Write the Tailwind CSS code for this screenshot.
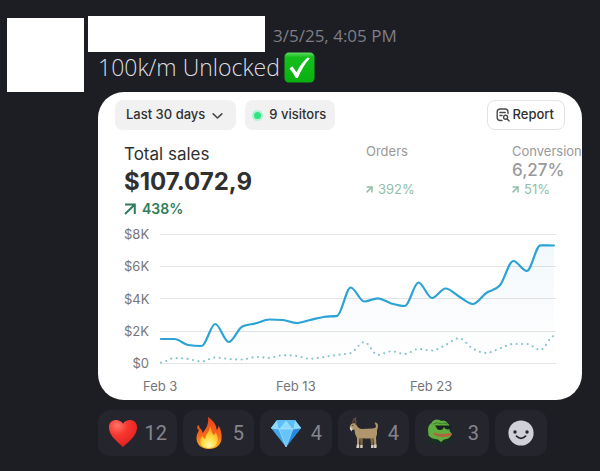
<!DOCTYPE html>
<html lang="en">
<head>
  <meta charset="UTF-8" />
  <meta name="viewport" content="width=device-width, initial-scale=1.0" />
  <title>100k/m Unlocked</title>
  <script src="https://cdn.jsdelivr.net/npm/@tailwindcss/browser@4"></script>
</head>
<body class="min-h-screen bg-[#1d1e23] overflow-x-hidden font-['Open_Sans',sans-serif]">

  <article class="flex pt-4 pl-[7px] pr-[18px]">
    <!-- Avatar -->
    <div class="mt-[2px] w-[77px] h-[74px] bg-white shrink-0"></div>

    <div class="ml-1 flex-1 min-w-0">
      <header class="flex items-center gap-2">
        <div class="w-[177px] h-9 bg-white shrink-0"></div>
        <time class="pt-1 text-[17px] leading-6 text-[#7d7d86] whitespace-nowrap">3/5/25, 4:05 PM</time>
      </header>

      <div class="pl-[10px]">
        <p class="flex items-center gap-1 h-[30px] text-[23px] font-light text-[#dcdce0] whitespace-nowrap">
          100k/m Unlocked
          <svg class="w-[31px] h-[31px] shrink-0" viewBox="0 0 31 31" aria-label="check">
            <defs>
              <linearGradient id="green" x1="0" y1="0" x2="0" y2="1">
                <stop offset="0" stop-color="#5fdc62" /><stop offset=".16" stop-color="#14bf1c" /><stop offset="1" stop-color="#08b010" />
              </linearGradient>
            </defs>
            <rect x=".5" y=".5" width="30" height="30" rx="4.500" fill="url(#green)" />
            <path d="M5.500 16.500 8.300 14.200 12.500 20.300 Q17 11 23.600 5.500 L25.800 6.300 Q18.500 14.500 13.800 26 L11.800 26 Q9 20.500 5.500 16.500Z" fill="#fff" />
          </svg>
        </p>

        <!-- Sales card -->
        <section class="mt-[10px] rounded-[26px] bg-white overflow-hidden font-['Inter',sans-serif] text-[#303030]">
          <div class="flex items-center gap-[9px] pt-2 pl-[17px] pr-[17px]">
            <button class="flex items-center gap-[6px] h-[30px] pl-[11px] pr-3 rounded-lg bg-[#f1f1f1] text-[13px] font-medium whitespace-nowrap">
              Last 30 days
              <svg class="w-[13px] h-[13px]" viewBox="0 0 12 12" fill="none" stroke="#4a4a4a" stroke-width="1.500" stroke-linecap="round" stroke-linejoin="round"><path d="M2 4.500 6 8.300 10 4.500" /></svg>
            </button>
            <button class="flex items-center gap-2 h-[30px] px-[9px] rounded-lg bg-[#f1f1f1] text-[13px] font-medium whitespace-nowrap">
              <span class="w-[7px] h-[7px] rounded-full bg-[#2ee585] ring-2 ring-[#b5f3d0]"></span>
              9 visitors
            </button>
            <button class="ml-auto flex items-center gap-[3px] h-[30px] pl-2 pr-[10px] rounded-lg border border-[#e3e3e3] text-[13px] font-medium whitespace-nowrap">
              <svg class="w-[14px] h-[14px]" viewBox="0 0 14 14" fill="none" stroke="#4a4a4a" stroke-width="1.400" stroke-linecap="round">
                <path d="M6 12.500H4.300Q1.200 12.500 1.200 9.400V4Q1.200 1 4.300 1H9Q12 1 12 4V5.500M3.900 4.500H9.300M3.900 7.500H6" />
                <circle cx="9.600" cy="9.300" r="2" /><path d="m11.200 10.900 1.900 2" />
              </svg>
              Report
            </button>
          </div>

          <div class="flex pl-[26px] mt-[11px] whitespace-nowrap">
            <div class="w-[242px] shrink-0 pt-px">
              <h2 class="text-[17px] leading-6">Total sales</h2>
              <p class="text-2xl leading-8 font-bold">$107.072,9</p>
              <p class="flex items-center gap-[6px] text-[14px] leading-[22px] font-semibold text-[#2f7d5b]">
                <svg class="w-3 h-3" viewBox="0 0 12 12" fill="none" stroke="currentColor" stroke-width="2"><path d="M1 1.500H10.800V11M10.500 1.800 1 11" /></svg>
                438%
              </p>
            </div>
            <div class="w-[146px] shrink-0 text-[#999]">
              <h3 class="text-[13px] leading-5">Orders</h3>
              <p class="mt-[18px] flex items-center gap-[5px] text-[13px] leading-5 text-[#8fbfa9]">
                <svg class="w-[7px] h-[7px]" viewBox="0 0 7 7" fill="none" stroke="currentColor" stroke-width="1.500"><path d="M.5 1H6V6.500M6 1 .6 6.400" /></svg>
                392%
              </p>
            </div>
            <div class="text-[#999]">
              <h3 class="text-[13px] leading-5">Conversion</h3>
              <p class="text-[17px] leading-[18px] font-medium">6,27%</p>
              <p class="flex items-center gap-[5px] text-[13px] leading-5 text-[#8fbfa9]">
                <svg class="w-[7px] h-[7px]" viewBox="0 0 7 7" fill="none" stroke="currentColor" stroke-width="1.500"><path d="M.5 1H6V6.500M6 1 .6 6.400" /></svg>
                51%
              </p>
            </div>
          </div>

          <!-- Chart -->
          <div class="flex pl-[26px] pr-[26px] mt-[6px] text-[13px] text-[#75757a]">
            <div class="w-[25px] h-[145px] flex flex-col justify-between text-right leading-4">
              <span>$8K</span><span>$6K</span><span>$4K</span><span>$2K</span><span>$0</span>
            </div>
            <svg class="ml-[11px] mt-1 flex-1 min-w-0 h-[140px]" viewBox="0 0 396 140" preserveAspectRatio="none" fill="none">
              <defs>
                <linearGradient id="area" x1="0" y1="0" x2="0" y2="1">
                  <stop offset="0" stop-color="#2f9fd0" stop-opacity=".07" /><stop offset="1" stop-color="#8888a0" stop-opacity="0" />
                </linearGradient>
              </defs>
              <path d="M0 4.500H396M0 36.500H396M0 68.500H396M0 101.500H396M0 133.500H396" stroke="#e4e4e6" />
              <path id="fill" fill="url(#area)" />
              <path id="previous" stroke="#85c5cb" stroke-width="2.200" stroke-linecap="round" stroke-dasharray="0 5.500" />
              <path id="current" stroke="#2ba3d4" stroke-width="2.200" stroke-linecap="round" />
            </svg>
          </div>
          <div class="flex pl-[45px] pt-[5px] pb-1 text-[13px] leading-5 text-[#75757a]">
            <span class="w-[133px]">Feb 3</span><span class="w-[134px]">Feb 13</span><span>Feb 23</span>
          </div>
        </section>

        <!-- Reactions -->
        <div class="mt-[10px] flex gap-[6px] text-xl text-[#85858f] font-['Roboto',sans-serif]">
          <button class="flex items-center justify-between h-[46px] w-[79px] px-[10px] rounded-xl bg-[#25262d]">
            <svg class="w-[30px] h-[30px]" viewBox="0 0 32 32">
              <defs><radialGradient id="heart" cx=".3" cy=".2" r=".9"><stop offset="0" stop-color="#ff7468" /><stop offset=".4" stop-color="#f8382f" /><stop offset="1" stop-color="#da1c1c" /></radialGradient></defs>
              <path d="M16 31C11 26 1 19 1 10 1 1 12 0 16 6 20 0 31 1 31 10 31 19 21 26 16 31Z" fill="url(#heart)" />
            </svg>
            12
          </button>
          <button class="flex items-center justify-between h-[46px] w-[71px] px-[10px] rounded-xl bg-[#25262d]">
            <svg class="w-[32px] h-[32px]" viewBox="0 0 32 32">
              <defs>
                <linearGradient id="fire" x1="0" y1="0" x2="0" y2="1"><stop offset="0" stop-color="#e8401c" /><stop offset=".6" stop-color="#f8691c" /><stop offset="1" stop-color="#ffb52c" /></linearGradient>
                <radialGradient id="flame" cx=".5" cy=".9" r=".8"><stop offset="0" stop-color="#fff7b0" /><stop offset=".5" stop-color="#ffdc3c" /><stop offset="1" stop-color="#ff9a22" /></radialGradient>
              </defs>
              <path d="M15 0C21 4 24 9 23.500 13 25 12 25.500 10 25.500 8.500 28 12 29 17 28.500 22 28 28 23 32 16 32 8 32 3 27 3.500 20 4 16 6 14 6.500 11 8.500 12 9.500 14 9.500 16 13 12 16 7 15 0ZM5 8Q8 10 5.500 13 3 11 5 8Z" fill="url(#fire)" />
              <path d="M17 9C19 13 18 15 21 18 22 17 22.500 16 22.500 15 25 19 26 24 23 28 20 32 11 32 8.500 28 6 24 8 20 10 19 10 21 11 22 12.500 22 12 17 17 15 17 9Z" fill="url(#flame)" />
            </svg>
            5
          </button>
          <button class="flex items-center justify-between h-[46px] w-[72px] px-[10px] rounded-xl bg-[#25262d]">
            <svg class="w-[32px] h-[32px]" viewBox="0 0 32 32">
              <path d="M7 3H25L31 11 16 30 1 11Z" fill="#43a9ee" />
              <path d="M7 3 9 12 1 11ZM16 3 9 12H23ZM25 3 31 11 23 12Z" fill="#8fdbfb" />
              <path d="M7 3H16L9 12ZM25 3H16L23 12Z" fill="#5fbdf5" />
              <path d="M9 12H23L16 30Z" fill="#68c4f8" /><path d="M23 12 31 11 16 30Z" fill="#2489df" />
              <path d="M1 11 9 12H23L31 11M9 12 16 30 23 12" stroke="#b8ebff" stroke-width=".6" fill="none" />
            </svg>
            4
          </button>
          <button class="flex items-center justify-between h-[46px] w-[71px] px-[10px] rounded-xl bg-[#25262d]">
            <svg class="w-[32px] h-[32px]" viewBox="0 0 32 32">
              <path d="M12 19 12.500 30H14.500L15 20ZM22 20 23.500 30H25.500L25.500 18Z" fill="#7f6748" />
              <path d="M2 9Q3.500 5.500 6.500 6L8.500 8Q10.500 12 14 12L24 11.500Q28 11.500 28 9L26.500 5.500Q29.500 5 30 8 30 11 29 13 29.500 18 28 20.500L28.500 30H26.500L25.500 21Q19 22 14 21L11.500 21.500 11 30H9L9 21Q6.500 17 6.500 12.500L4 13Q1.500 11.500 2 9Z" fill="#b0966c" />
              <path d="M5 6.500Q4.500 2 7.500 1 7 3.500 8 7.500M7.500 7Q8.500 3.500 6.500 1.500" stroke="#6a4a40" stroke-width="1.300" fill="none" />
              <path d="M1.800 9.500 4.500 11 3.800 14.500 2 12.500ZM8.800 27.500H11.200V31H8.300ZM26.300 27.500H28.500V31H26ZM12.400 28H14.600V31H12.200ZM23.200 28H25.500V31H23Z" fill="#d9d0c0" />
              <circle cx="4.800" cy="8.500" r=".6" fill="#302820" />
            </svg>
            4
          </button>
          <button class="flex items-center justify-between h-[46px] w-[74px] px-[10px] rounded-xl bg-[#25262d]">
            <svg class="w-[32px] h-[32px]" viewBox="0 0 32 32">
              <path d="M4 19Q3 25 7 26L20 27 26 23 24 19Z" fill="#17301f" />
              <path d="M3 13Q3 8 6.500 6 8 2.500 12 2.500 15 2.500 16.500 4 20 2.500 23 6.500L25 9 24.500 14 27 17Q25 22 19 22.500L16 25 13 22.500Q6 22 3.500 18.500Z" fill="#5fae3f" />
              <path d="M8.500 7Q12 4.500 17 7M17.500 6.500Q20 5.500 22.500 7" stroke="#397a2c" stroke-width="1" fill="none" />
              <path d="M10 8.500 27 8.500V10Q26 12.500 23 12.500 20 12.500 19.500 10.500H18.500Q18 13 15 13 12 13 11.500 10.500Z" fill="#17231c" />
              <path d="M9 15.500Q13 18 25.500 16L27 17.500Q24 20 18 20 11 20 8.500 17Z" fill="#b5623a" />
            </svg>
            3
          </button>
          <button class="flex items-center justify-center h-[46px] w-[52px] rounded-xl bg-[#25262d]" aria-label="Add reaction">
            <svg class="w-[26px] h-[26px]" viewBox="0 0 26 26">
              <circle cx="13" cy="13" r="12.600" fill="#d0d0d8" />
              <circle cx="7" cy="12" r="1.700" fill="#25262d" /><circle cx="19" cy="12" r="1.700" fill="#25262d" />
              <path d="M8.500 16.200Q13 20.500 17.500 16.200" stroke="#25262d" stroke-width="1.800" stroke-linecap="round" fill="none" />
            </svg>
          </button>
        </div>
      </div>
    </div>
  </article>

  <script>
    // one value per day, in chart units
    const current = [109, 109, 115, 116, 94, 112, 96.5, 93.3, 89.5, 90, 93, 90, 87, 85.8, 57.5, 71.5, 68.3, 73.5, 76, 52.5, 68, 58.5, 66.5, 74, 63, 55.5, 31, 41, 15.3, 15.5];
    const previous = [132.5, 128, 129, 131.5, 127.5, 129, 129.5, 127, 127.8, 125.2, 126, 128.8, 127, 125, 123, 112, 125, 121.3, 124, 119, 120.5, 115, 108.3, 118.5, 123, 118.5, 114, 114, 120, 106];
    const step = 13.55;

    // monotone cubic through all the points
    function curve(ys) {
      const d = ys.slice(1).map((y, i) => (y - ys[i]) / step);
      const m = ys.map((_, i) => {
        if (i === 0 || i === ys.length - 1) return 0;
        if (d[i - 1] * d[i] <= 0) return 0;
        return Math.sign(d[i]) * Math.min(Math.abs(d[i - 1]), Math.abs(d[i]), Math.abs(d[i - 1] + d[i]) / 4) * 2;
      });
      let path = `M1 ${ys[0]}`;
      for (let i = 1; i < ys.length; i++) {
        const x0 = 1 + (i - 1) * step, x1 = 1 + i * step, t = step / 3;
        path += `C${x0 + t} ${ys[i - 1] + m[i - 1] * t} ${x1 - t} ${ys[i] - m[i] * t} ${x1} ${ys[i]}`;
      }
      return path;
    }

    document.getElementById("current").setAttribute("d", curve(current));
    document.getElementById("previous").setAttribute("d", curve(previous));
    document.getElementById("fill").setAttribute("d", curve(current) + "V133H1Z");
  </script>
</body>
</html>
